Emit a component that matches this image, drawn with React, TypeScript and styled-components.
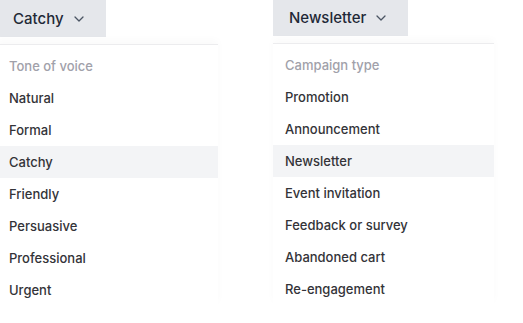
import styled, { createGlobalStyle } from 'styled-components'

const GlobalStyle = createGlobalStyle`
  body {
    margin: 0;
    background: #ffffff;
    font-family: Inter, "Noto Sans", sans-serif;
  }
`

const Page = styled.div`
  display: flex;
  align-items: flex-start;
  gap: 55px;
  margin-left: -3px;
`

const Panel = styled.div<{ $offset: number }>`
  display: flex;
  flex-direction: column;
  width: 221px;
  margin-top: ${({ $offset }) => $offset}px;
`

const Trigger = styled.button`
  display: flex;
  align-items: center;
  align-self: flex-start;
  gap: 10px;
  height: 37px;
  padding: 0 22px 0 16px;
  border: none;
  background: #e5e7eb;
  color: #1f2937;
  font-family: Inter, "Noto Sans", sans-serif;
  font-size: 15px;
  font-weight: 500;
  cursor: pointer;
`

const Menu = styled.div`
  margin-top: 7px;
  padding-top: 5px;
  border-top: 1px solid #ececee;
  background: #fff;
  box-shadow: 0 -4px 8px rgba(0, 0, 0, 0.025);
  display: flex;
  flex-direction: column;
`

const Heading = styled.div`
  height: 32px;
  display: flex;
  align-items: center;
  padding: 0 12px;
  font-size: 13px;
  font-weight: 500;
  color: #a1a1aa;
`

const Item = styled.div<{ $active?: boolean }>`
  height: 32px;
  display: flex;
  align-items: center;
  padding: 0 12px;
  font-size: 13px;
  font-weight: 500;
  color: #333338;
  background: ${({ $active }) => ($active ? '#f3f4f6' : 'transparent')};
`

function Chevron() {
  return (
    <svg width="10" height="6" viewBox="0 0 10 6" fill="none">
      <path d="M1 1l4 4 4-4" stroke="#4b5563" strokeWidth="1.3" strokeLinecap="round" strokeLinejoin="round" />
    </svg>
  )
}

interface DropdownProps {
  value: string
  heading: string
  options: string[]
  offset: number
}

function Dropdown({ value, heading, options, offset }: DropdownProps) {
  return (
    <Panel $offset={offset}>
      <Trigger>
        {value}
        <Chevron />
      </Trigger>
      <Menu>
        <Heading>{heading}</Heading>
        {options.map((o) => (
          <Item key={o} $active={o === value}>
            {o}
          </Item>
        ))}
      </Menu>
    </Panel>
  )
}

export default function App() {
  return (
    <>
      <GlobalStyle />
      <Page>
        <Dropdown
          value="Catchy"
          heading="Tone of voice"
          offset={0}
          options={['Natural', 'Formal', 'Catchy', 'Friendly', 'Persuasive', 'Professional', 'Urgent']}
        />
        <Dropdown
          value="Newsletter"
          heading="Campaign type"
          offset={-1}
          options={['Promotion', 'Announcement', 'Newsletter', 'Event invitation', 'Feedback or survey', 'Abandoned cart', 'Re-engagement']}
        />
      </Page>
    </>
  )
}
